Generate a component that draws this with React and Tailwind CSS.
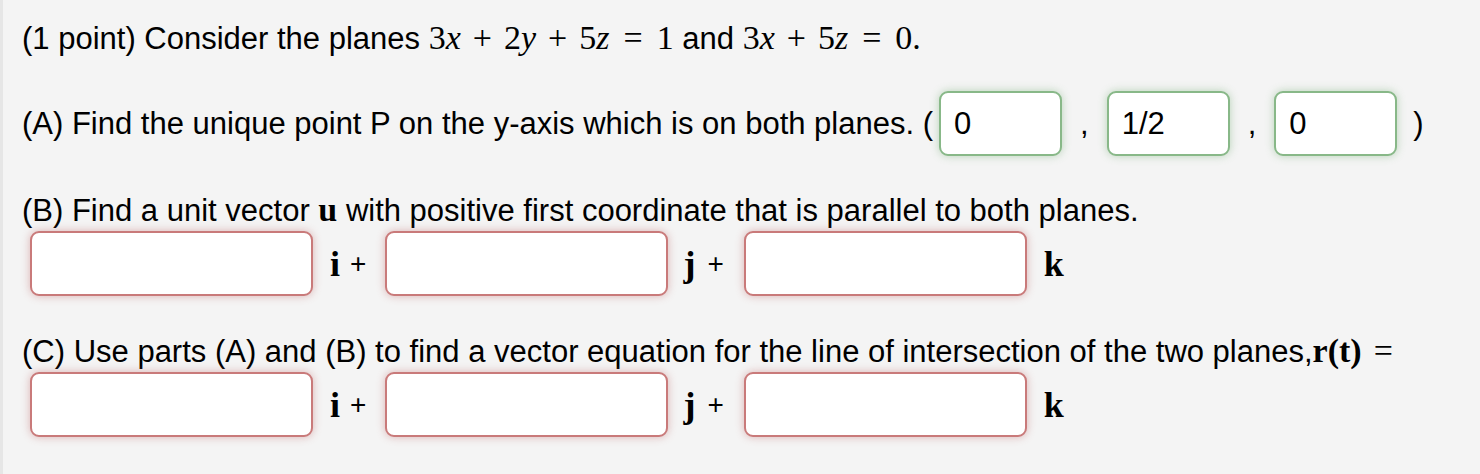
import React from "react";

const sans = { fontFamily: '"Liberation Sans", Arial, sans-serif' };
const serif = { fontFamily: '"Liberation Serif", "Times New Roman", serif' };

function Op({ children, eq }) {
  return <span className={eq ? "mx-[14px]" : "mx-[12px]"}>{children}</span>;
}

function M({ children, className = "" }) {
  return (
    <span className={"text-[34px] " + className} style={serif}>
      {children}
    </span>
  );
}

function GreenBox({ value }) {
  return (
    <div className="w-[123px] h-[65px] bg-white border-2 border-[#88b888] rounded-[9px] shadow-[0_0_8px_rgba(110,170,110,0.45)] flex items-center pl-[13px] text-[31px] text-black">
      {value}
    </div>
  );
}

function RedBox() {
  return (
    <div className="w-[283px] h-[65px] bg-white border-2 border-[#c97a7a] rounded-[9px] shadow-[0_0_9px_rgba(190,100,100,0.45)]" />
  );
}

function VecRow({ mt }) {
  return (
    <div className={"flex items-center pl-[8px] " + mt}>
      <RedBox />
      <span className="ml-[17px] text-[36px] font-bold leading-none" style={serif}>i</span>
      <span className="ml-[10px] mr-[19px] text-[28px] leading-none">+</span>
      <RedBox />
      <span className="ml-[15px] text-[36px] font-bold leading-none" style={serif}>j</span>
      <span className="ml-[12px] mr-[20px] text-[28px] leading-none">+</span>
      <RedBox />
      <span className="ml-[17px] text-[36px] font-bold leading-none" style={serif}>k</span>
    </div>
  );
}

export default function App() {
  return (
    <div className="w-[1480px] h-[474px] bg-[#f4f4f4] border-l-[3px] border-[#e6e6e6] text-black" style={sans}>
      <div className="pl-[19px] pt-[20px] text-[31px] leading-[36px]">
        <div className="whitespace-nowrap">
          (1 point) Consider the planes{" "}
          <M>3<i>x</i><Op>+</Op>2<i>y</i><Op>+</Op>5<i>z</i><Op eq>=</Op>1</M> and{" "}
          <M>3<i>x</i><Op>+</Op>5<i>z</i><Op eq>=</Op>0.</M>
        </div>

        <div className="mt-[34px] flex items-center whitespace-nowrap">
          <span>(A) Find the unique point P on the y-axis which is on both planes. (</span>
          <div className="ml-[6px]"><GreenBox value="0" /></div>
          <span className="ml-[18px] mr-[18px]">,</span>
          <GreenBox value="1/2" />
          <span className="ml-[18px] mr-[18px]">,</span>
          <GreenBox value="0" />
          <span className="ml-[16px]">)</span>
        </div>

        <div className="mt-[36px] whitespace-nowrap">
          (B) Find a unit vector <M className="font-bold">u</M> with positive first coordinate that is parallel to both planes.
        </div>
        <VecRow mt="mt-[2px]" />

        <div className="mt-[37px] whitespace-nowrap">
          (C) Use parts (A) and (B) to find a vector equation for the line of intersection of the two planes,<M className="font-bold">r(t)</M><M className="ml-[12px]">=</M>
        </div>
        <VecRow mt="mt-[2px]" />
      </div>
    </div>
  );
}
